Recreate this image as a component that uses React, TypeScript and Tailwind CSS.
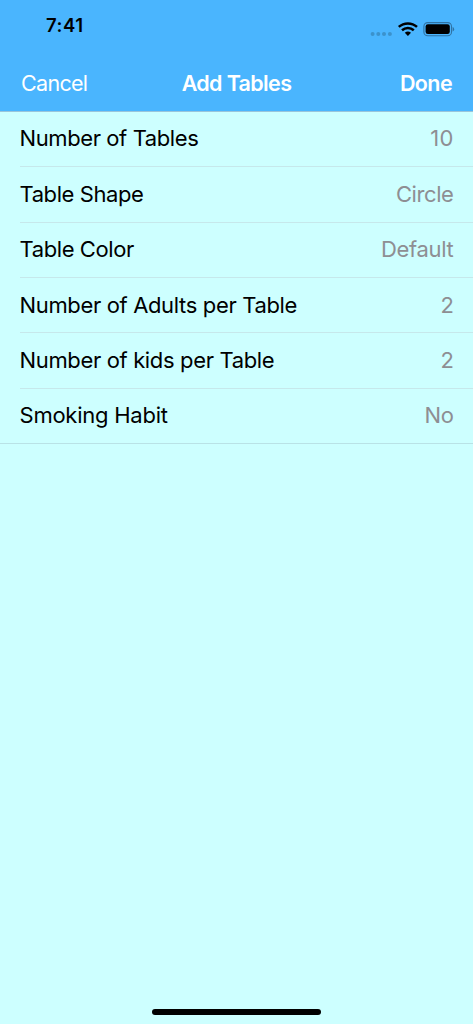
type Row = {
  label: string;
  value: string;
  box: string;
  tracking: string;
  valueTracking: string;
  last?: boolean;
};

const rows: Row[] = [
  { label: 'Number of Tables', value: '10', box: 'h-[55px] pb-[2px]', tracking: 'tracking-[-0.4px]', valueTracking: 'tracking-[0.2px]' },
  { label: 'Table Shape', value: 'Circle', box: 'h-[56px] pb-[2px]', tracking: 'tracking-[-0.41px]', valueTracking: 'tracking-[-0.42px]' },
  { label: 'Table Color', value: 'Default', box: 'h-[55px] pb-[2px]', tracking: 'tracking-[-0.4px]', valueTracking: 'tracking-[-0.3px]' },
  { label: 'Number of Adults per Table', value: '2', box: 'h-[55px]', tracking: 'tracking-[-0.35px]', valueTracking: 'tracking-[-0.3px]' },
  { label: 'Number of kids per Table', value: '2', box: 'h-[56px] pb-[2px]', tracking: 'tracking-[-0.35px]', valueTracking: 'tracking-[-0.3px]' },
  { label: 'Smoking Habit', value: 'No', box: 'h-[54px] pb-[2px]', tracking: 'tracking-[-0.24px]', valueTracking: 'tracking-[-0.4px]', last: true },
];

function StatusBar() {
  return (
    <div className="flex h-[56px] items-start justify-between pl-[46px] pr-[18px] text-black">
      <span className="mt-[13px] text-[18.5px] leading-[24px] font-semibold tracking-[0.5px]">7:41</span>
      <svg className="mt-[20px]" width="86" height="20" viewBox="0 0 86 20" fill="none">
        <g fill="#3b92cc">
          <circle cx="3.6" cy="14" r="2" />
          <circle cx="9.3" cy="14" r="2" />
          <circle cx="15" cy="14" r="2" />
          <circle cx="20.9" cy="14" r="2" />
        </g>
        <g stroke="#000" strokeWidth="2.5">
          <path d="M29.8 6.9a13.6 13.6 0 0 1 18.2 0" />
          <path d="M33 10.3a8.9 8.9 0 0 1 11.8 0" />
        </g>
        <path d="M35.8 12.8a4.7 4.7 0 0 1 6.2 0L38.9 15.9z" fill="#000" />
        <rect x="54.9" y="2.6" width="27.6" height="13.2" rx="3.8" stroke="#2f72a3" strokeWidth="1.1" />
        <rect x="56.6" y="4.3" width="24.2" height="9.8" rx="2.3" fill="#000" />
        <path d="M83.6 7v4.6q1.5-.6 1.5-2.3T83.6 7z" fill="#2f72a3" />
      </svg>
    </div>
  );
}

export default function App() {
  return (
    <div className="flex h-[1024px] w-[473px] flex-col bg-[#cdffff] font-['Inter','Liberation_Sans',sans-serif]">
      <header className="h-[112px] border-b border-[#9ac5da] bg-[#4ab5fe]">
        <StatusBar />
        <nav className="grid h-[54px] grid-cols-3 items-center px-[21px] text-[21.5px] leading-[28px] text-white">
          <button className="justify-self-start tracking-[-0.7px]">Cancel</button>
          <h1 className="justify-self-center font-semibold whitespace-nowrap tracking-[-0.65px]">Add Tables</h1>
          <button className="justify-self-end font-semibold tracking-[-0.6px]">Done</button>
        </nav>
      </header>
      <main className="grow text-[22px] leading-[28px]">
        {rows.map((row) => (
          <div
            key={row.label}
            className={row.last ? 'border-b border-[#b9e2e6]' : 'pl-5'}
          >
            <div
              className={`${row.box} flex items-center justify-between pr-[19.5px] ${
                row.last ? 'pl-[19.5px]' : 'border-b border-[#c6e8eb]'
              }`}
            >
              <span className={`${row.tracking} ${row.last ? '' : '-ml-[0.5px]'} text-black`}>{row.label}</span>
              <span className={`${row.valueTracking} text-[#8e8e93]`}>{row.value}</span>
            </div>
          </div>
        ))}
      </main>
      <footer className="flex h-[15px] justify-center">
        <div className="h-[6px] w-[169px] rounded-full bg-black" />
      </footer>
    </div>
  );
}
